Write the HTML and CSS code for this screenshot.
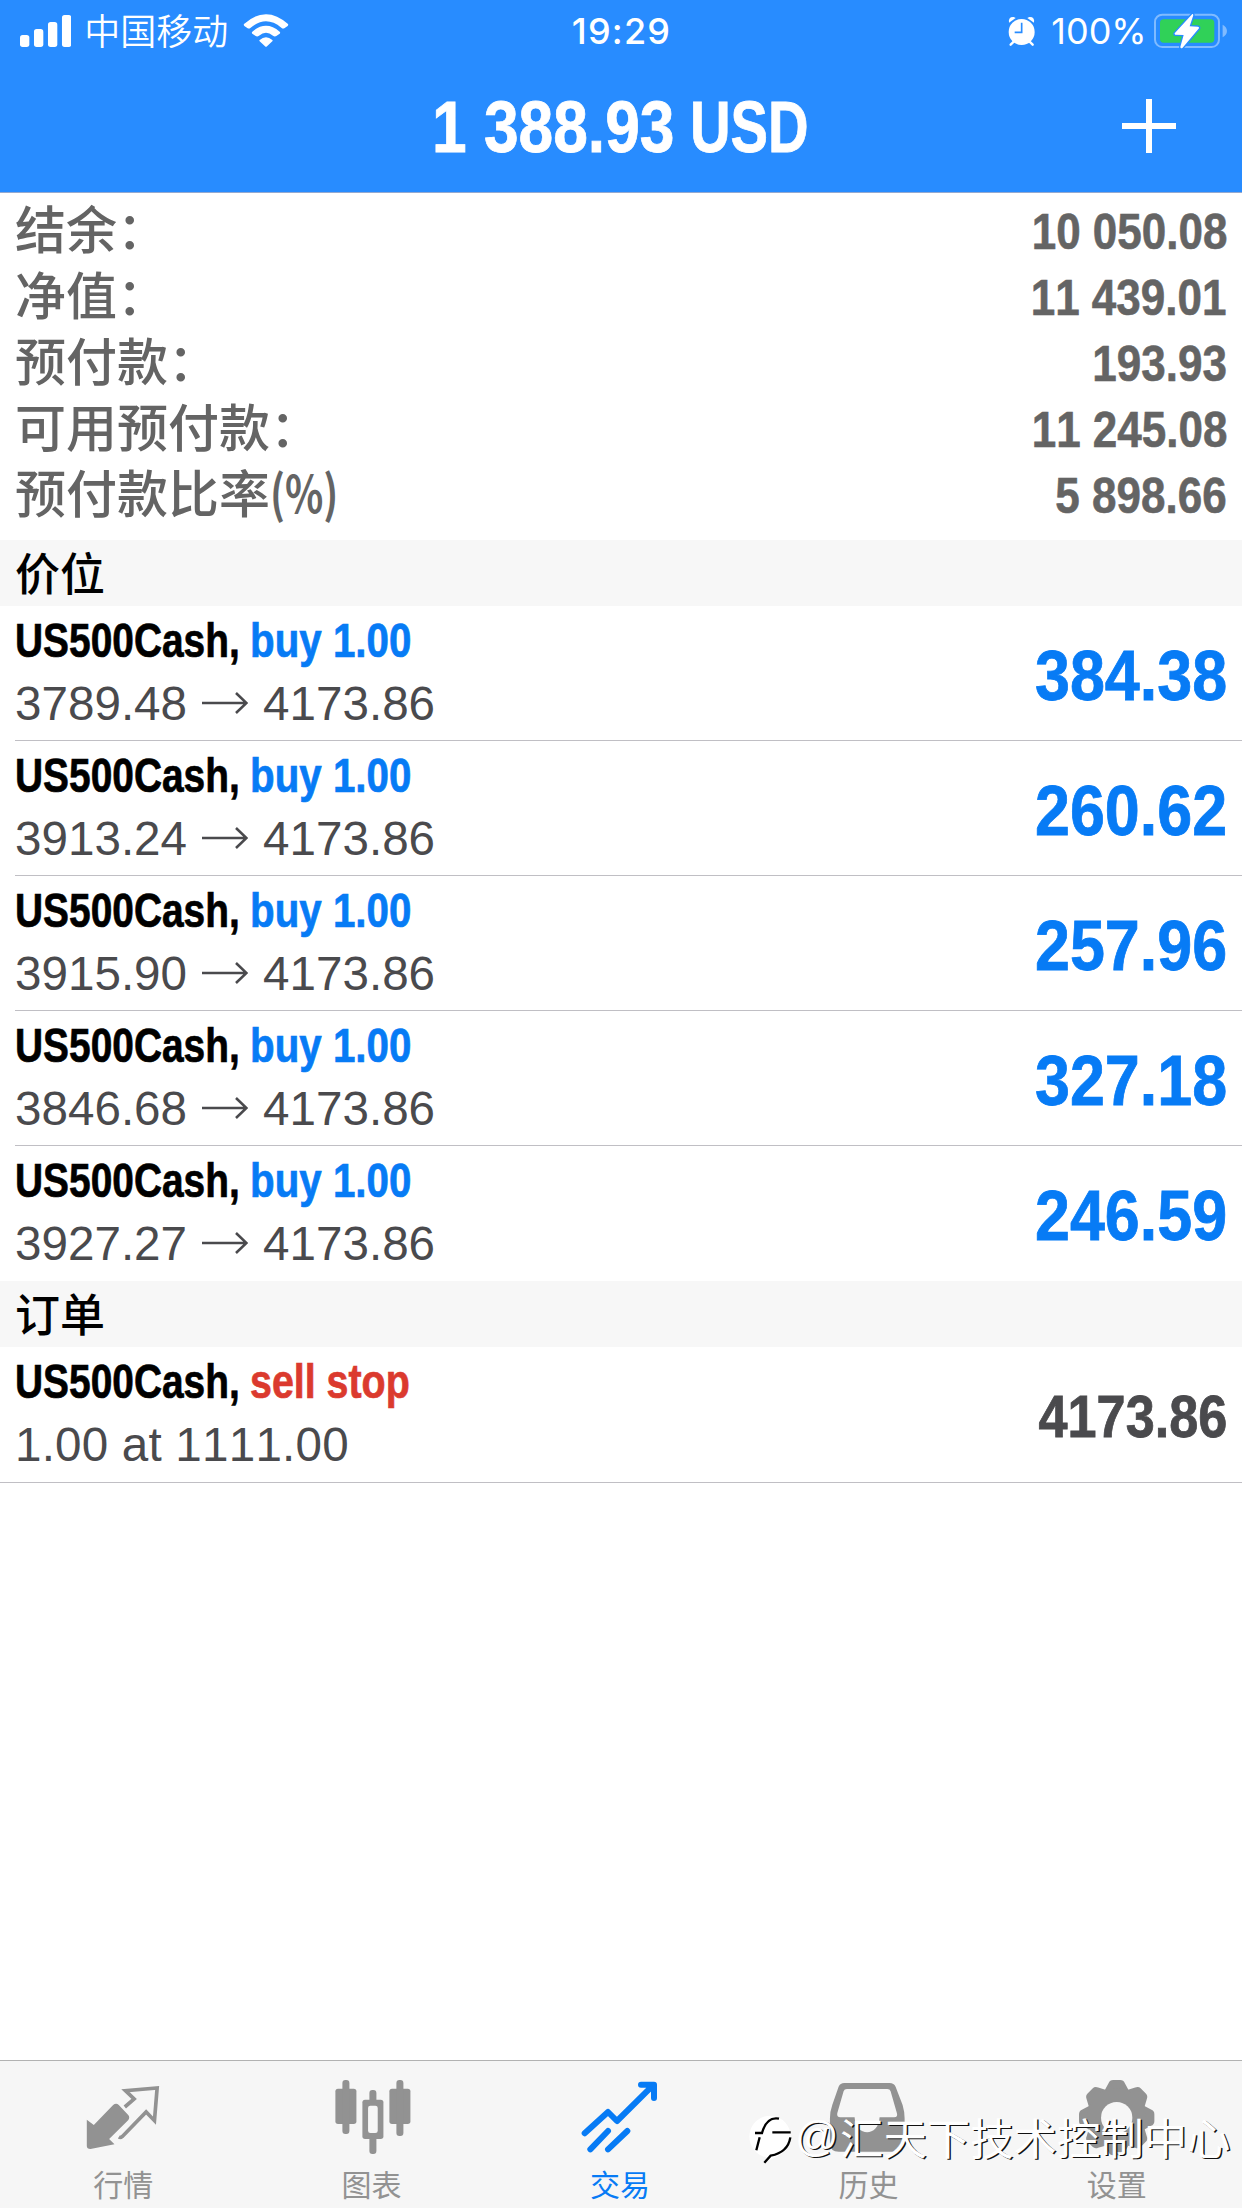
FILE: index.html
```html
<!DOCTYPE html>
<html lang="zh-CN">
<head>
<meta charset="utf-8">
<title>交易</title>
<link rel="stylesheet" href="styles.css">
</head>
<body>
<div class="app">
  <header class="header">
    <div class="status">
      <div class="status-left">
        <svg class="signal" viewBox="60 42 154 96"><rect x="60" y="102" width="28" height="36" rx="8"/><rect x="102" y="84" width="28" height="54" rx="8"/><rect x="144" y="63" width="28" height="75" rx="8"/><rect x="186" y="42" width="28" height="96" rx="8"/></svg>
        <span class="carrier">中国移动</span>
        <svg class="wifi" viewBox="729 36 138 102"><path d="M732 69Q798 10 864 69Q866 72 863 75L853 82Q848 84 844 80Q798 42 752 80Q748 84 743 82L733 75Q730 72 732 69Z"/><path d="M757 92Q798 57 839 92Q842 95 839 98L829 105Q824 108 819 104Q798 87 777 104Q772 108 767 105L757 98Q754 95 757 92Z"/><path d="M779 117Q798 101 817 117Q819 119 817 121L801 136Q798 139 795 136L779 121Q777 119 779 117Z"/></svg>
      </div>
      <span class="clock">19:29</span>
      <div class="status-right">
        <svg class="alarm" viewBox="146 46 84 90"><g><circle cx="187" cy="94" r="39"/><path d="M149 66Q146 48 163 49L169 52Z"/><path d="M224 66Q227 48 210 49L204 52Z"/></g><path class="feet" d="M164 122L154 132M210 122L220 132"/><path class="hands" d="M187 66V95H166"/></svg>
        <span class="percent">100%</span>
        <svg class="battery" viewBox="579 36 220 108"><rect class="shell" x="582" y="41" width="192" height="97" rx="22"/><path class="cap" d="M785 71Q798 78 798 90T785 109Z"/><rect class="charge" x="597" y="55" width="163" height="70" rx="11"/><path class="bolt" d="M694 39L641 97Q640 100 643 101L668 102L658 138Q659 144 665 140L714 82Q715 78 711 77L686 76L697 43Q697 38 694 39Z"/></svg>
      </div>
    </div>
    <div class="titlebar">
      <h1 class="title"><span class="title-num">1 388.93</span><span class="title-cur">USD</span></h1>
      <svg class="plus" viewBox="0 0 54 54"><path d="M27 0V54M0 27H54"/></svg>
    </div>
  </header>

  <section class="summary">
    <div class="sum-row"><span>结余：</span><b>10 050.08</b></div>
    <div class="sum-row"><span>净值：</span><b class="ends-one">11 439.01</b></div>
    <div class="sum-row"><span>预付款：</span><b>193.93</b></div>
    <div class="sum-row"><span>可用预付款：</span><b>11 245.08</b></div>
    <div class="sum-row"><span>预付款比率<i class="pct">(%)</i></span><b>5 898.66</b></div>
  </section>

  <h2 class="group">价位</h2>
  <ul class="list">
    <li class="row"><div class="info"><div class="name"><span class="symbol">US500Cash,</span><span class="side buy">buy 1.00</span></div><div class="price">3789.48<svg class="arrow" viewBox="0 0 46 22"><path d="M0 11H44M34 1L44.500 11L34 21"/></svg>4173.86</div></div><b class="profit">384.38</b></li>
    <li class="row"><div class="info"><div class="name"><span class="symbol">US500Cash,</span><span class="side buy">buy 1.00</span></div><div class="price">3913.24<svg class="arrow" viewBox="0 0 46 22"><path d="M0 11H44M34 1L44.500 11L34 21"/></svg>4173.86</div></div><b class="profit">260.62</b></li>
    <li class="row"><div class="info"><div class="name"><span class="symbol">US500Cash,</span><span class="side buy">buy 1.00</span></div><div class="price">3915.90<svg class="arrow" viewBox="0 0 46 22"><path d="M0 11H44M34 1L44.500 11L34 21"/></svg>4173.86</div></div><b class="profit">257.96</b></li>
    <li class="row"><div class="info"><div class="name"><span class="symbol">US500Cash,</span><span class="side buy">buy 1.00</span></div><div class="price">3846.68<svg class="arrow" viewBox="0 0 46 22"><path d="M0 11H44M34 1L44.500 11L34 21"/></svg>4173.86</div></div><b class="profit">327.18</b></li>
    <li class="row last"><div class="info"><div class="name"><span class="symbol">US500Cash,</span><span class="side buy">buy 1.00</span></div><div class="price">3927.27<svg class="arrow" viewBox="0 0 46 22"><path d="M0 11H44M34 1L44.500 11L34 21"/></svg>4173.86</div></div><b class="profit">246.59</b></li>
  </ul>

  <h2 class="group">订单</h2>
  <ul class="list orders">
    <li class="row last"><div class="info"><div class="name"><span class="symbol">US500Cash,</span><span class="side sell">sell stop</span></div><div class="price">1.00 at 1111.00</div></div><b class="profit quote">4173.86</b></li>
  </ul>

  <nav class="tabs">
    <a class="tab"><svg viewBox="252.6 78 240 240"><path d="M340 165Q349 158 357 165L386 196Q391 204 385 211L328 267L344 283L272 297Q261 297 261 288V209L282 225Z"/><path class="line" d="M375 171L403 147L377 122L472 114L464 212L439 186L367 260Q362 264 357 261"/></svg><span>行情</span></a>
    <a class="tab"><svg viewBox="997.8 78 240 240"><rect x="1005" y="116" width="63" height="106" rx="8"/><rect x="1026" y="90" width="21" height="162" rx="9"/><rect x="1167" y="116" width="63" height="106" rx="8"/><rect x="1188" y="90" width="21" height="168" rx="9"/><rect x="1107" y="120" width="21" height="192" rx="9"/><rect x="1086" y="149" width="63" height="118" rx="8"/><rect class="hole" x="1103" y="167" width="29" height="82" rx="7"/></svg><span>图表</span></a>
    <a class="tab active"><svg viewBox="123 78 240 240"><path class="bar" d="M134 250L204 186L231 213L338 107M303 104H342V144M151 298L204 243M204 298L262 243"/></svg><span>交易</span></a>
    <a class="tab"><svg viewBox="868.2 78 240 240"><path fill-rule="evenodd" d="M914 99H1050Q1063 99 1068 110L1089 165Q1095 185 1095 205V278Q1095 305 1068 305H898Q871 305 871 278V205Q871 185 878 165L897 110Q902 99 914 99ZM922 117Q914 117 912 124L893 190Q891 202 902 202H945C948 262 1017 262 1020 202H1064Q1075 202 1072 190L1053 124Q1051 117 1043 117Z"/></svg><span>历史</span></a>
    <a class="tab"><svg viewBox="593.4 78 240 240"><g><path id="tooth" d="M672 124L685 100Q689 90 699 90H720Q730 90 734 100L747 124Z"/><use href="#tooth" transform="rotate(45 709.500 203)"/><use href="#tooth" transform="rotate(90 709.500 203)"/><use href="#tooth" transform="rotate(135 709.500 203)"/><use href="#tooth" transform="rotate(180 709.500 203)"/><use href="#tooth" transform="rotate(225 709.500 203)"/><use href="#tooth" transform="rotate(270 709.500 203)"/><use href="#tooth" transform="rotate(315 709.500 203)"/></g><circle cx="709.500" cy="203" r="88"/><circle class="hole" cx="709.500" cy="203" r="47"/></svg><span>设置</span></a>
  </nav>

  <div class="watermark">
    <svg viewBox="624 205 138 150"><path class="disc" d="M690 210A63 63 0 0 1 752 278Q745 320 700 338L674 351L680 335A63 63 0 0 1 690 210Z"/><path class="ink" d="M717 219Q680 212 666 262H645M659 275L649 314M697 260H752M751 275Q744 320 692 330L673 351"/></svg>
    <span class="at">@</span><span class="owner">汇天下技术控制中心</span>
  </div>
</div>
</body>
</html>
```
FILE: styles.css
```css
* { box-sizing: border-box; margin: 0; padding: 0; }
body {
  width: 1242px;
  background: #fff;
  font-family: "Liberation Sans", "Noto Sans CJK SC", sans-serif;
  font-kerning: none;
}
svg { display: block; flex: none; }
.app { position: relative; width: 1242px; height: 2208px; display: flex; flex-direction: column; overflow: hidden; }

.header { height: 193px; background: #288cff; border-bottom: 1px solid #94a9d0; color: #fff; display: flex; flex-direction: column; flex: none; }
.status { height: 60px; display: grid; grid-template-columns: 1fr auto 1fr; align-items: center; padding: 0 15px 0 20px; font-family: Inter, "Noto Sans CJK SC", sans-serif; font-size: 36px; line-height: 60px; }
.status svg { fill: #fff; }
.status-left, .status-right { display: flex; align-items: center; height: 60px; }
.status-right { justify-content: flex-end; }
.signal { width: 51.300px; height: 32px; }
.carrier { font-family: "Noto Sans CJK SC", sans-serif; font-weight: 350; margin: -4px 0 0 13px; }
.wifi { width: 46px; height: 34px; margin: -2px 0 0 15px; }
.clock { font-weight: 500; letter-spacing: 1.200px; margin: 0 1px 0 -3px; padding-top: 1px; }
.alarm { width: 28px; height: 30px; margin-right: 15px; }
.alarm .feet { stroke: #fff; stroke-width: 7; stroke-linecap: round; }
.alarm .hands { fill: none; stroke: #288cff; stroke-width: 5; }
.percent { padding-top: 1px; }
.battery { width: 73.300px; height: 36px; margin-left: 7px; }
.battery .shell { fill: none; stroke: #80bbff; stroke-width: 6; }
.battery .cap { fill: #80bbff; }
.battery .charge { fill: #30d158; }
.battery .bolt { stroke: #288cff; stroke-width: 8; paint-order: stroke; }

.titlebar { height: 131px; position: relative; display: flex; align-items: center; justify-content: flex-end; padding-right: 66px; }
.title { position: absolute; left: 432px; top: 0; display: flex; font-size: 72px; line-height: 134px; font-weight: 700; white-space: pre; -webkit-text-stroke: .8px; }
.title-num { width: 258px; transform: scaleX(.865); transform-origin: left; }
.title-cur { transform: scaleX(.78); transform-origin: left; }
.plus { width: 54px; height: 54px; stroke: #fff; stroke-width: 6; }

.summary { height: 347px; padding: 1px 15px 0; flex: none; color: #646464; }
.sum-row { height: 66px; line-height: 66px; display: flex; justify-content: space-between; align-items: baseline; white-space: nowrap; }
.sum-row span { font-family: "Noto Sans CJK SC", sans-serif; font-size: 51px; font-weight: 500; }
.sum-row b { font-size: 50px; transform: scaleX(.88); transform-origin: right; -webkit-text-stroke: .6px; }
.sum-row .ends-one { margin-right: 1px; }
.pct { display: inline-block; height: 66px; font-style: normal; font-weight: 700; transform: scaleX(.78); transform-origin: left; }

.group { height: 66px; flex: none; padding-left: 15px; background: #f7f7f7; font: 500 45px/64px "Noto Sans CJK SC", sans-serif; color: #000; }
.list { list-style: none; padding-left: 15px; flex: none; }
.row { height: 135px; display: flex; justify-content: space-between; border-bottom: 1px solid #c0bfc4; padding-right: 15px; }
.row.last { border-bottom: 0; }
.info { padding-top: 5px; }
.name { display: flex; height: 60px; line-height: 60px; font-size: 48px; font-weight: 700; white-space: nowrap; -webkit-text-stroke: .7px; }
.symbol { width: 235px; transform: scaleX(.81); transform-origin: left; color: #000; }
.side { transform: scaleX(.84); transform-origin: left; }
.buy { color: #077bf5; }
.sell { color: #db3a2e; transform: scaleX(.82); }
.price { display: flex; align-items: center; height: 66px; line-height: 66px; font-size: 47.600px; color: #4a4a4d; white-space: pre; }
.arrow { width: 46px; height: 22px; margin: -3px 15px 0; fill: none; stroke: #4a4a4d; stroke-width: 2.600; }
.profit { font-size: 71px; line-height: 135px; padding-top: 2px; color: #077bf5; transform: scaleX(.885); transform-origin: right; -webkit-text-stroke: .8px; }
.quote { font-size: 59px; padding-top: 3px; color: #4a4a4d; }
.orders { padding-left: 0; border-bottom: 1px solid #c0bfc4; }
.orders .info { padding-left: 15px; }
.orders .price { letter-spacing: .2px; }

.tabs { margin-top: auto; height: 148px; flex: none; border-top: 1px solid #b2b2b2; background: #f6f6f6; display: grid; grid-template-columns: repeat(5, 1fr); color: #929292; }
.tab { display: flex; flex-direction: column; align-items: center; padding-top: 15px; font: 400 30px/44px "Noto Sans CJK SC", sans-serif; }
.tab svg { width: 80px; height: 80px; fill: currentColor; }
.tab span { margin: 5px 2px 0 0; }
.tab .hole { fill: #f6f6f6; }
.tab .line { fill: none; stroke: currentColor; stroke-width: 11; }
.tab .bar { fill: none; stroke: currentColor; stroke-width: 18; stroke-linecap: round; stroke-linejoin: round; }
.tabs .active { color: #077bf5; }

.watermark { position: absolute; left: 748px; top: 2106px; height: 60px; display: flex; align-items: center; color: #fff; text-shadow: 1.500px 1px 0 #111; white-space: nowrap; }
.watermark svg { width: 46px; height: 50px; margin-top: 5px; }
.disc { fill: #fff; }
.ink { fill: none; stroke: #000; stroke-width: 7; }
.at { width: 46px; padding-left: 1px; font-size: 43px; line-height: 60px; }
.owner { font: 400 43.400px/60px "Noto Sans CJK SC", sans-serif; }
```
